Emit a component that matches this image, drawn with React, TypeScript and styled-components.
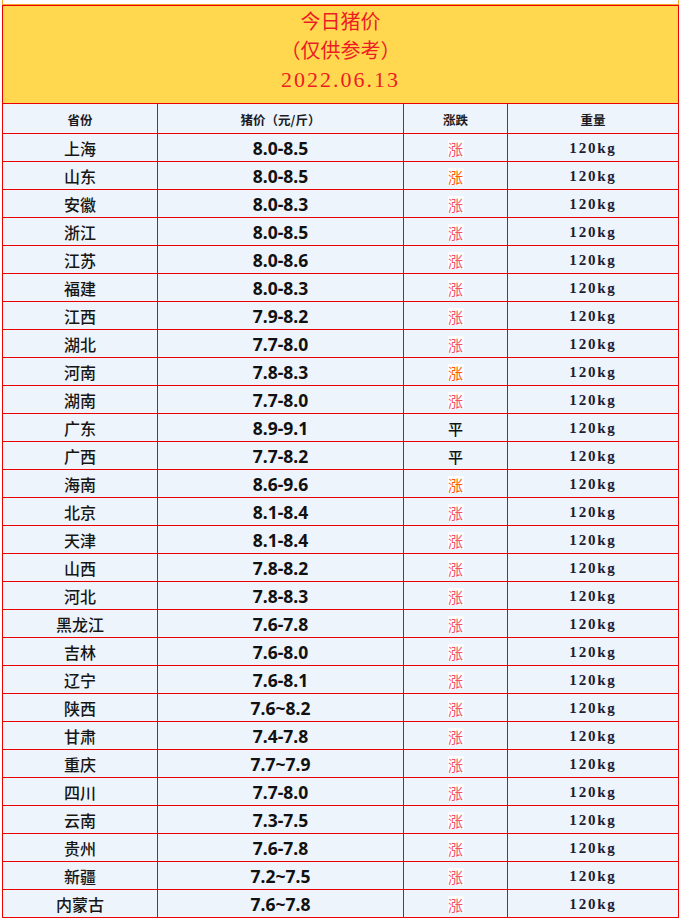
import React from 'react';
import styled, { createGlobalStyle } from 'styled-components';

type Trend = 'up' | 'upHot' | 'flat';

interface Row {
  province: string;
  price: string;
  trend: Trend;
}

const rows: Row[] = [
  { province: '上海', price: '8.0-8.5', trend: 'up' },
  { province: '山东', price: '8.0-8.5', trend: 'upHot' },
  { province: '安徽', price: '8.0-8.3', trend: 'up' },
  { province: '浙江', price: '8.0-8.5', trend: 'up' },
  { province: '江苏', price: '8.0-8.6', trend: 'up' },
  { province: '福建', price: '8.0-8.3', trend: 'up' },
  { province: '江西', price: '7.9-8.2', trend: 'up' },
  { province: '湖北', price: '7.7-8.0', trend: 'up' },
  { province: '河南', price: '7.8-8.3', trend: 'upHot' },
  { province: '湖南', price: '7.7-8.0', trend: 'up' },
  { province: '广东', price: '8.9-9.1', trend: 'flat' },
  { province: '广西', price: '7.7-8.2', trend: 'flat' },
  { province: '海南', price: '8.6-9.6', trend: 'upHot' },
  { province: '北京', price: '8.1-8.4', trend: 'up' },
  { province: '天津', price: '8.1-8.4', trend: 'up' },
  { province: '山西', price: '7.8-8.2', trend: 'up' },
  { province: '河北', price: '7.8-8.3', trend: 'up' },
  { province: '黑龙江', price: '7.6-7.8', trend: 'up' },
  { province: '吉林', price: '7.6-8.0', trend: 'up' },
  { province: '辽宁', price: '7.6-8.1', trend: 'up' },
  { province: '陕西', price: '7.6~8.2', trend: 'up' },
  { province: '甘肃', price: '7.4-7.8', trend: 'up' },
  { province: '重庆', price: '7.7~7.9', trend: 'up' },
  { province: '四川', price: '7.7-8.0', trend: 'up' },
  { province: '云南', price: '7.3-7.5', trend: 'up' },
  { province: '贵州', price: '7.6-7.8', trend: 'up' },
  { province: '新疆', price: '7.2~7.5', trend: 'up' },
  { province: '内蒙古', price: '7.6~7.8', trend: 'up' },
];

const GlobalStyle = createGlobalStyle`
  body {
    margin: 0;
    background: #ffffff;
    font-family: "Noto Sans CJK SC", "Noto Sans", sans-serif;
  }
`;

export default function App() {
  return (
    <>
      <GlobalStyle />
      <Page>
        <TopStrip />
        <Sheet>
          <Banner>
            <TitleBlock>
              <Title>今日猪价</Title>
              <Title>（仅供参考）</Title>
            </TitleBlock>
            <DateLine>2022.06.13</DateLine>
          </Banner>
          <Grid>
            <HeadCell>省份</HeadCell>
            <HeadCell>猪价（元/斤）</HeadCell>
            <HeadCell>涨跌</HeadCell>
            <HeadCell>重量</HeadCell>
            {rows.map(r => (
              <React.Fragment key={r.province}>
                <ProvinceCell>{r.province}</ProvinceCell>
                <PriceCell>{r.price}</PriceCell>
                <TrendCell>
                  {r.trend === 'flat' ? (
                    <Flat>平</Flat>
                  ) : (
                    <Rise hot={r.trend === 'upHot'}>涨</Rise>
                  )}
                </TrendCell>
                <WeightCell>120kg</WeightCell>
              </React.Fragment>
            ))}
          </Grid>
        </Sheet>
      </Page>
    </>
  );
}

const Page = styled.div`
  width: 684px;
  padding-left: 2px;
  box-sizing: border-box;
`;

const TopStrip = styled.div`
  width: 677px;
  height: 5px;
  box-sizing: border-box;
  border: 1px solid #f4a52a;
  border-top: none;
  background: #ffffff;
`;

const Sheet = styled.div`
  width: 677px;
  box-sizing: border-box;
  border-left: 1px solid #ee0000;
  border-top: 1px solid #ee0000;
`;

const Banner = styled.div`
  height: 98px;
  box-sizing: border-box;
  background: #ffd84f;
  border-right: 1px solid #ee0000;
  border-bottom: 1px solid #ee0000;
  display: flex;
  flex-direction: column;
  align-items: center;
  color: #ec1c24;
`;

const TitleBlock = styled.div`
  height: 60px;
  display: flex;
  flex-direction: column;
  align-items: center;
  box-sizing: border-box;
`;

const Title = styled.div`
  font-family: "Noto Sans CJK SC", sans-serif;
  font-size: 20px;
  line-height: 29px;
`;

const DateLine = styled.div`
  font-family: "Liberation Serif", serif;
  font-size: 22px;
  letter-spacing: 2px;
  line-height: 28px;
`;

const Grid = styled.div`
  display: grid;
  grid-template-columns: 155px 246px 104px 171px;
  grid-auto-rows: 28px;
  grid-template-rows: 30px;
  background: #edf4fb;
`;

const Cell = styled.div`
  box-sizing: border-box;
  border-right: 1px solid #ee0000;
  border-bottom: 1px solid #ee0000;
  display: flex;
  align-items: center;
  justify-content: center;
  color: #1b1b24;
`;

const HeadCell = styled(Cell)`
  font-size: 12.5px;
  font-weight: 700;
  padding-top: 2px;
`;

const ProvinceCell = styled(Cell)`
  font-size: 16px;
  font-weight: 500;
  color: #161616;
`;

const PriceCell = styled(Cell)`
  font-family: "Noto Sans", "Noto Sans CJK SC", sans-serif;
  font-size: 17.5px;
  font-weight: 700;
  color: #111111;
`;

const TrendCell = styled(Cell)`
  padding-top: 1px;
`;

const Rise = styled.span<{ hot: boolean }>`
  display: inline-block;
  width: 16px;
  height: 17px;
  line-height: 17px;
  text-align: center;
  background: #ffffff;
  font-size: 15px;
  color: ${p => (p.hot ? '#ff5a00' : '#f4506a')};
`;

const Flat = styled.span`
  font-size: 15px;
  font-weight: 500;
  color: #111111;
`;

const WeightCell = styled(Cell)`
  font-family: "Liberation Serif", serif;
  font-size: 15px;
  font-weight: 700;
  letter-spacing: 1.8px;
  color: #1c1c33;
  padding-top: 2px;
`;
